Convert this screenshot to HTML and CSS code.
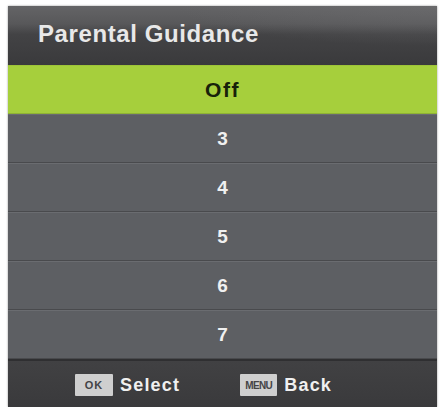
FILE: index.html
```
<!DOCTYPE html>
<html>
<head>
<meta charset="utf-8">
<link rel="stylesheet" href="styles.css">
</head>
<body>
<div class="panel">
  <div class="header"><span class="title">Parental Guidance</span></div>
  <div class="list">
    <div class="row selected">Off</div>
    <div class="row">3</div>
    <div class="row">4</div>
    <div class="row">5</div>
    <div class="row">6</div>
    <div class="row">7</div>
  </div>
  <div class="footer">
    <div class="hint"><span class="key key-ok">OK</span><span class="label">Select</span></div>
    <div class="hint"><span class="key key-menu">MENU</span><span class="label">Back</span></div>
  </div>
</div>
</body>
</html>
```
FILE: styles.css
```
html, body {
  margin: 0;
  padding: 0;
  background: #ffffff;
}
body {
  font-family: "Liberation Sans", Arial, sans-serif;
}
.panel {
  margin: 6px 0 0 8px;
  width: 429px;
  height: 401px;
  display: flex;
  flex-direction: column;
  background: #3b3b3d;
  box-shadow: 0 0 2px rgba(0,0,0,0.4);
}
.header {
  height: 61px;
  box-sizing: border-box;
  padding: 16px 0 0 30px;
  background:
    radial-gradient(ellipse 260px 40px at 100% 0%, rgba(110,110,112,0.55), rgba(110,110,112,0) 100%),
    linear-gradient(#646466 0%, #58585a 30%, #434345 48%, #3a3a3c 100%);
  border-bottom: 2px solid #333335;
}
.title {
  display: block;
  font-size: 24px;
  line-height: 24px;
  font-weight: bold;
  letter-spacing: 0.6px;
  color: #e8e8e8;
}
.list {
  display: flex;
  flex-direction: column;
}
.row {
  height: 49px;
  box-sizing: border-box;
  display: flex;
  align-items: center;
  justify-content: center;
  font-size: 19px;
  font-weight: bold;
  color: #f0f0f0;
  background: #5d5f63;
  border-top: 1px solid #6a6c70;
  border-bottom: 1px solid #494a4d;
}
.row.selected {
  height: 49px;
  margin-top: -2px;
  background: #a6cf3c;
  border-top: 1px solid #9ec437;
  border-bottom: 1px solid #8fb334;
  color: #17220a;
  font-size: 21px;
  letter-spacing: 1.5px;
}
.footer {
  flex: 1;
  display: flex;
  align-items: center;
  padding: 2px 0 0 67px;
  gap: 60px;
  background: linear-gradient(#414143 0%, #3a3a3c 100%);
  border-top: 2px solid #2f2f31;
}
.hint {
  display: flex;
  align-items: center;
  gap: 7px;
}
.key {
  width: 38px;
  height: 22px;
  display: flex;
  align-items: center;
  justify-content: center;
  background: #cfcfcf;
  color: #444446;
  font-weight: bold;
  border-radius: 1px;
}
.key-ok {
  font-size: 11px;
  letter-spacing: 1px;
}
.key-menu {
  width: 37px;
  font-size: 10px;
  letter-spacing: -0.6px;
}
.label {
  font-size: 18px;
  font-weight: bold;
  letter-spacing: 1.2px;
  color: #f0f0f0;
}
```
